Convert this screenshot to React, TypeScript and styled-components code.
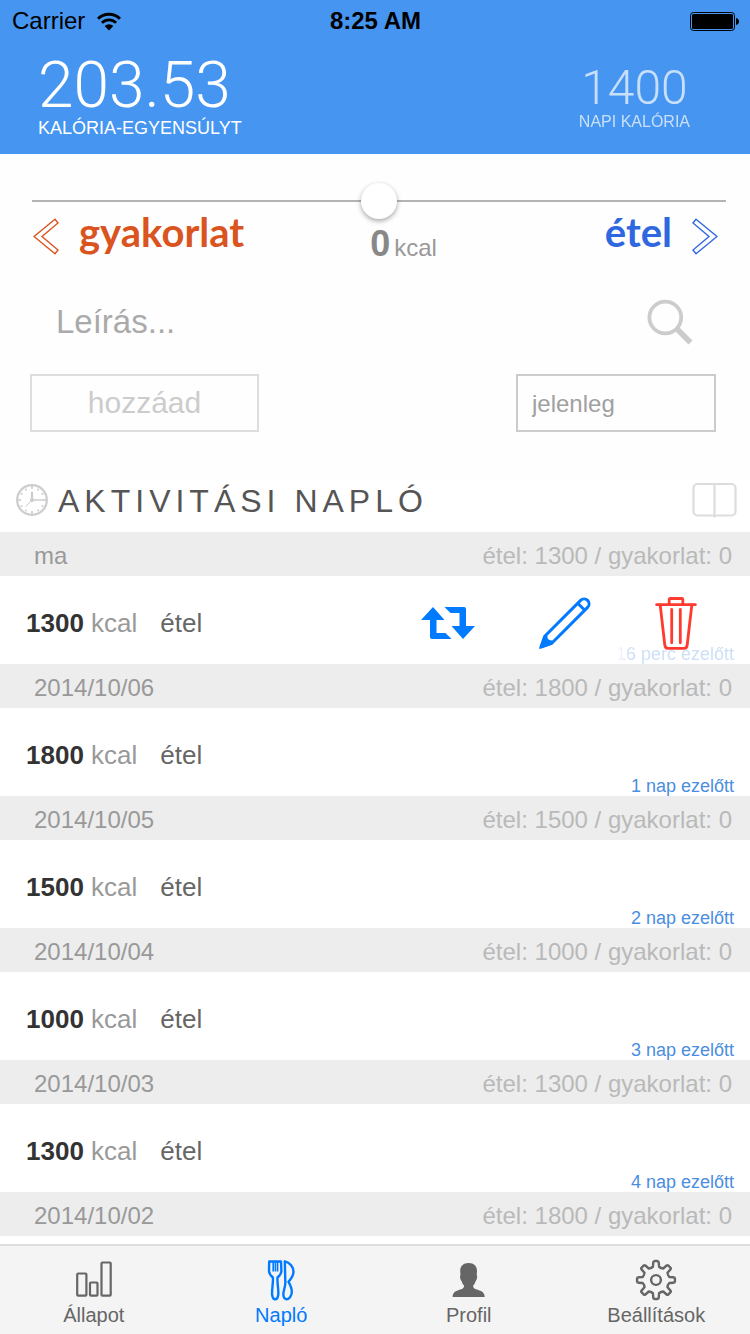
import React from "react";
import styled, { createGlobalStyle, css } from "styled-components";

const GlobalStyle = createGlobalStyle`
  *, *::before, *::after { box-sizing: border-box; }
  body {
    margin: 0;
    background: #fff;
    font-family: "Liberation Sans", Arial, sans-serif;
  }
  button, input { font-family: inherit; }
  button { padding: 0; border: 0; background: none; cursor: pointer; }
`;

const blue = "#007aff";
const red = "#ff3b30";

const Screen = styled.div`
  display: flex;
  flex-direction: column;
  min-height: 100vh;
`;

const Header = styled.header`
  background: #4595f1;
  padding-bottom: 16px;
`;

const StatusBar = styled.div`
  display: grid;
  grid-template-columns: 1fr auto 1fr;
  align-items: center;
  height: 40px;
  padding: 2px 11px 0 12px;
  font-size: 24px;
  line-height: 28px;
  color: #000;
`;

const Carrier = styled.div`
  display: flex;
  align-items: center;
  gap: 12px;
`;

const Time = styled.time`
  font-weight: 700;
`;

const BatterySlot = styled.div`
  display: flex;
  justify-content: flex-end;
`;

const Totals = styled.div`
  display: flex;
  justify-content: space-between;
  padding: 14px 60px 0 38px;
  color: #fff;
`;

const Total = styled.div<{ $minor?: boolean }>`
  display: flex;
  flex-direction: column;
  ${({ $minor }) =>
    $minor &&
    css`
      align-items: center;
      padding-top: 10px;
      opacity: 0.7;
    `}
`;

const TotalValue = styled.span<{ $minor?: boolean }>`
  font-family: Roboto, "Liberation Sans", sans-serif;
  font-weight: 300;
  font-size: ${({ $minor }) => ($minor ? 48 : 64)}px;
  line-height: ${({ $minor }) => ($minor ? 48 : 64)}px;
`;

const TotalLabel = styled.span<{ $minor?: boolean }>`
  font-size: ${({ $minor }) => ($minor ? 16 : 18)}px;
  line-height: 20px;
`;

const Entry = styled.form`
  background: #fefefe;
  padding-top: 28px;
`;

const Slider = styled.input`
  appearance: none;
  display: block;
  width: calc(100% - 56px);
  height: 38px;
  margin: 0 24px 0 32px;
  background: linear-gradient(#b3b3b3, #b3b3b3) center / 100% 2px no-repeat;

  &::-webkit-slider-thumb {
    appearance: none;
    width: 36px;
    height: 36px;
    border-radius: 50%;
    background: #fff;
    box-shadow: 0 2px 5px rgba(0, 0, 0, 0.35);
  }
`;

const Directions = styled.div`
  display: grid;
  grid-template-columns: 1fr auto 1fr;
  height: 50px;
  padding: 0 32px 0 33px;
`;

const Direction = styled.button<{ $color: string; $end?: boolean }>`
  display: flex;
  align-items: center;
  justify-self: ${({ $end }) => ($end ? "end" : "start")};
  gap: 20px;
  height: 32px;
  color: ${({ $color }) => $color};
  font-family: Lato, "Liberation Sans", sans-serif;
  font-weight: 700;
  font-size: 40px;
  line-height: 32px;
`;

const DirectionLabel = styled.span`
  padding-bottom: 8px;
`;

const Amount = styled.output`
  align-self: start;
  padding-left: 56px;
  font-size: 24px;
  line-height: 48px;
  color: #999;
`;

const AmountValue = styled.b`
  margin-right: 4px;
  font-size: 36px;
  color: #888;
`;

const SearchRow = styled.div`
  display: flex;
  align-items: center;
  justify-content: space-between;
  height: 64px;
  margin-top: 20px;
  padding: 0 57px 0 56px;
`;

const Description = styled.input`
  flex: 1;
  min-width: 0;
  padding: 0;
  border: 0;
  background: none;
  font-size: 33px;
  line-height: 40px;
  color: #555;
  &::placeholder { color: #aaa; opacity: 1; }
`;

const IconButton = styled.button<{ $color: string }>`
  display: flex;
  color: ${({ $color }) => $color};
`;

const SubmitRow = styled.div`
  display: flex;
  justify-content: space-between;
  padding: 20px 34px 48px 30px;
`;

const AddButton = styled.button`
  width: 229px;
  height: 58px;
  border: 2px solid #ddd;
  font-size: 30px;
  color: #ccc;
`;

const WhenInput = styled.input`
  width: 200px;
  height: 58px;
  padding: 2px 14px 0;
  border: 2px solid #ccc;
  background: none;
  font-size: 24px;
  color: #555;
  &::placeholder { color: #a0a0a0; opacity: 1; }
`;

const LogBar = styled.div`
  display: flex;
  align-items: center;
  gap: 10px;
  height: 52px;
  padding: 0 13px 12px 16px;
`;

const LogTitle = styled.h1`
  flex: 1;
  margin: 0;
  font-size: 32px;
  line-height: 40px;
  font-weight: 400;
  letter-spacing: 5px;
  color: #555;
  padding-top: 2px;
`;

const Log = styled.main`
  flex: 1;
`;

const DayHeader = styled.h2`
  display: flex;
  align-items: center;
  justify-content: space-between;
  height: 44px;
  margin: 0;
  padding: 4px 18px 0 34px;
  background: #ededed;
  font-size: 24px;
  line-height: 28px;
  font-weight: 400;
  color: #999;
`;

const DayTotals = styled.span`
  color: #b9b9b9;
`;

const LogRow = styled.article`
  position: relative;
  display: flex;
  align-items: center;
  height: 88px;
  padding: 0 53px 0 26px;
  background: #fff;
  font-size: 26px;
  line-height: 30px;
`;

const Calories = styled.span`
  padding-top: 6px;
  color: #999;
`;

const CaloriesValue = styled.b`
  color: #333;
`;

const Kind = styled.span`
  flex: 1;
  padding: 6px 0 0 23px;
  color: #666;
`;

const Actions = styled.div`
  display: flex;
  align-items: center;
  gap: 64px;
  padding-top: 6px;
`;

const Ago = styled.span<{ $faded?: boolean }>`
  position: absolute;
  right: 16px;
  bottom: 0;
  font-size: 18px;
  line-height: 20px;
  color: #4a8ee0;
  ${({ $faded }) =>
    $faded &&
    css`
      opacity: 0.28;
      pointer-events: none;
      mask-image: linear-gradient(to right, transparent, #000 14px);
    `}
`;

const TabBar = styled.nav`
  position: sticky;
  bottom: 0;
  display: grid;
  grid-template-columns: repeat(4, 1fr);
  height: 90px;
  border-top: 2px solid #dedede;
  background: #f4f4f4;
`;

const Tab = styled.a<{ $active?: boolean }>`
  display: flex;
  flex-direction: column;
  align-items: center;
  gap: 2px;
  padding-top: 13px;
  font-size: 20px;
  line-height: 24px;
  text-decoration: none;
  color: ${({ $active }) => ($active ? blue : "#666")};
`;

const WifiIcon = () => (
  <svg width="24" height="19" viewBox="0 0 24 19" fill="none" stroke="#000" aria-hidden="true">
    <path d="M1 6.8a15.6 15.6 0 0 1 22 0" strokeWidth="3" />
    <path d="M4.9 10.8a10 10 0 0 1 14.2 0" strokeWidth="2.8" />
    <path d="M12 18.4l-4.3-4.3a6 6 0 0 1 8.6 0z" fill="#000" stroke="none" />
  </svg>
);

const BatteryIcon = () => (
  <svg width="49" height="19" viewBox="0 0 49 19" aria-hidden="true">
    <rect x="0.5" y="0.5" width="44" height="18" rx="3" fill="none" stroke="#000" />
    <rect x="2" y="2" width="41" height="15" rx="1.5" />
    <path d="M46 6q3 .6 3 3.5T46 13z" />
  </svg>
);

const Chevron = ({ flip = false }: { flip?: boolean }) => (
  <svg width="26" height="37" viewBox="0 0 26 37" fill="none" stroke="currentColor" strokeWidth="1.4" aria-hidden="true">
    <path
      d={flip ? "M25 18.5L4 1.2L1 5L17 18.5L1 32L4 35.8Z" : "M1 18.5L22 1.2L25 5L9 18.5L25 32L22 35.8Z"}
    />
  </svg>
);

const SearchIcon = () => (
  <svg width="48" height="48" viewBox="0 0 48 48" fill="none" stroke="currentColor" aria-hidden="true">
    <circle cx="20.3" cy="19.5" r="15.9" strokeWidth="3.8" />
    <path d="M31.5 30.5L45.5 44.5" strokeWidth="5.6" />
  </svg>
);

const ClockIcon = () => (
  <svg width="32" height="32" viewBox="0 0 32 32" fill="none" stroke="#ccc" aria-hidden="true">
    <circle cx="16" cy="16" r="14.8" strokeWidth="2.2" />
    {Array.from({ length: 12 }, (_, i) => (
      <path key={i} d={i % 3 ? "M16 3v1.8" : "M16 2v3"} strokeWidth="1.6" transform={`rotate(${i * 30} 16 16)`} />
    ))}
    <path d="M16 8v8" strokeWidth="2.2" />
    <path d="M16 16h11" strokeWidth="1.4" />
    <path d="M16 16l-6.5 6.5" strokeWidth="1" />
    <circle cx="16" cy="16" r="2" fill="#ccc" stroke="none" />
  </svg>
);

const BookIcon = () => (
  <svg width="45" height="36" viewBox="0 0 45 36" fill="none" stroke="currentColor" strokeWidth="2.2" strokeLinecap="round" aria-hidden="true">
    <rect x="1.5" y="2" width="42" height="31.5" rx="4" />
    <path d="M22.5 2.5V34.8" />
  </svg>
);

const RepeatIcon = () => (
  <svg width="54" height="32" viewBox="0 0 54 32" fill="currentColor" aria-hidden="true">
    <path d="M12 0L23.5 13H15.5V26H24.5L30.5 32H11Q9 32 9 30V13H0Z" />
    <path d="M42 32L30.5 19H38.5V6H29.5L23.5 0H43Q45 0 45 2V19H54Z" />
  </svg>
);

const PencilIcon = () => (
  <svg width="52" height="52" viewBox="0 0 52 52" fill="none" stroke="currentColor" strokeWidth="3" aria-hidden="true">
    <path d="M2 50L6 39L41.6 3.4a4.9 4.9 0 0 1 7 7L13 46Z" strokeLinejoin="round" />
    <path d="M38.5 6L46 13.5" />
    <path d="M0 52L4.5 38.5L8.5 38.5Q7.5 43.500 13.5 43.5L13.5 47.5Z" fill="currentColor" stroke="none" />
  </svg>
);

const TrashIcon = () => (
  <svg width="42" height="54" viewBox="0 0 42 54" fill="none" stroke="currentColor" strokeWidth="2.8" strokeLinecap="round" strokeLinejoin="round" aria-hidden="true">
    <path d="M1.6 8.7H40.4M14.2 8.5V3.5Q14.2 2.5 15.2 2.5H26.8Q27.8 2.5 27.8 3.5V8.5" />
    <path d="M5.2 9L9.8 49Q10.2 52.3 13 52.3H29Q31.8 52.3 32.2 49L36.8 9M16.7 13.5V46.8M25.3 13.5V46.8" />
  </svg>
);

const BarsIcon = () => (
  <svg width="38" height="42" viewBox="0 0 38 42" fill="none" stroke="currentColor" strokeWidth="2.2" aria-hidden="true">
    <rect x="2.2" y="14.5" width="9.2" height="22.2" rx="1" />
    <rect x="15" y="23.5" width="7.5" height="13.2" rx="1" />
    <rect x="26.5" y="3.5" width="9.2" height="33.2" rx="1" />
  </svg>
);

const CutleryIcon = () => (
  <svg width="30" height="42" viewBox="0 0 30 42" fill="none" stroke="currentColor" strokeWidth="2.4" strokeLinejoin="round" aria-hidden="true">
    <path d="M3.2 2.5H15L15.4 12Q15.2 15.5 11.5 18.5C11 24 12.8 31 12.3 35.5Q11.7 40.3 9.2 40.3T6.1 35.5C5.6 31 7.4 24 6.9 18.5Q3.2 15.5 3 12Z" />
    <path d="M7.2 2.5V12.5M9.4 2.5V12.5M11.6 2.5V12.5" strokeWidth="1.6" />
    <path d="M18.8 2.3C24 3.5 27.5 8 27.5 12.8C27.5 17 25 20 22.5 22.8C25 27 26.5 31 25.5 35Q24 40 20.5 40.3C17.5 40 16.8 36 17.8 32C18.5 28.5 19.7 26 19.3 22.5Z" />
  </svg>
);

const PersonIcon = () => (
  <svg width="34" height="42" viewBox="0 -3 34 42" fill="currentColor" aria-hidden="true">
    <path d="M16.6 1C22 1 25 4 25 9C25 11 24.6 12 24.8 13C25.6 14 25 18 23.7 19C23 21 22.2 22.5 21.2 23.5C21 25.5 22 26.5 24 27.2C29 28.7 32.7 30 32.7 35H.6C.6 30 4.2 28.7 9.2 27.2C11.2 26.5 12.2 25.5 12 23.5C11 22.5 10.2 21 9.5 19C8.2 18 7.6 14 8.4 13C8.6 12 8.2 11 8.2 9C8.2 4 11.2 1 16.6 1Z" />
  </svg>
);

const gearPoint = (radius: number, degrees: number) => {
  const a = (degrees * Math.PI) / 180;
  return `${(21 + radius * Math.sin(a)).toFixed(2)} ${(21 - radius * Math.cos(a)).toFixed(2)}`;
};

const gearPath =
  Array.from({ length: 8 }, (_, i) => {
    const c = i * 45;
    return [
      `${i ? "L" : "M"}${gearPoint(13.6, c - 13)}`,
      `L${gearPoint(17.6, c - 9)}`,
      `Q${gearPoint(19, c - 8)} ${gearPoint(19, c - 5)}`,
      `L${gearPoint(19, c + 5)}`,
      `Q${gearPoint(19, c + 8)} ${gearPoint(17.6, c + 9)}`,
      `L${gearPoint(13.6, c + 13)}`,
      `Q${gearPoint(12.6, c + 22.5)} ${gearPoint(13.6, c + 32)}`,
    ].join("");
  }).join("") + "Z";

const GearIcon = () => (
  <svg width="42" height="42" viewBox="0 0 42 42" fill="none" stroke="currentColor" strokeWidth="2.4" strokeLinejoin="round" aria-hidden="true">
    <path d={gearPath} />
    <circle cx="21" cy="21" r="4.9" />
  </svg>
);

interface Day {
  date: string;
  food: number;
  ago?: string;
  open?: boolean;
}

const days: Day[] = [
  { date: "ma", food: 1300, ago: "16 perc ezelőtt", open: true },
  { date: "2014/10/06", food: 1800, ago: "1 nap ezelőtt" },
  { date: "2014/10/05", food: 1500, ago: "2 nap ezelőtt" },
  { date: "2014/10/04", food: 1000, ago: "3 nap ezelőtt" },
  { date: "2014/10/03", food: 1300, ago: "4 nap ezelőtt" },
  { date: "2014/10/02", food: 1800 },
];

const DaySection = ({ date, food, ago, open }: Day) => (
  <section>
    <DayHeader>
      {date}
      <DayTotals>étel: {food} / gyakorlat: 0</DayTotals>
    </DayHeader>
    {ago && (
      <LogRow>
        <Calories>
          <CaloriesValue>{food}</CaloriesValue> kcal
        </Calories>
        <Kind>étel</Kind>
        <Ago $faded={open}>{ago}</Ago>
        {open && (
          <Actions>
            <IconButton type="button" $color={blue} aria-label="Ismétlés"><RepeatIcon /></IconButton>
            <IconButton type="button" $color={blue} aria-label="Szerkesztés"><PencilIcon /></IconButton>
            <IconButton type="button" $color={red} aria-label="Törlés"><TrashIcon /></IconButton>
          </Actions>
        )}
      </LogRow>
    )}
  </section>
);

export default function App() {
  return (
    <Screen>
      <GlobalStyle />
      <Header>
        <StatusBar>
          <Carrier>Carrier <WifiIcon /></Carrier>
          <Time>8:25 AM</Time>
          <BatterySlot><BatteryIcon /></BatterySlot>
        </StatusBar>
        <Totals>
          <Total>
            <TotalValue>203.53</TotalValue>
            <TotalLabel>KALÓRIA-EGYENSÚLYT</TotalLabel>
          </Total>
          <Total $minor>
            <TotalValue $minor>1400</TotalValue>
            <TotalLabel $minor>NAPI KALÓRIA</TotalLabel>
          </Total>
        </Totals>
      </Header>

      <Entry onSubmit={(e) => e.preventDefault()}>
        <Slider type="range" min={-1000} max={1000} defaultValue={0} aria-label="kcal" />
        <Directions>
          <Direction type="button" $color="#d9541e">
            <Chevron />
            <DirectionLabel>gyakorlat</DirectionLabel>
          </Direction>
          <Amount><AmountValue>0</AmountValue>kcal</Amount>
          <Direction type="button" $color="#2f67e0" $end>
            <DirectionLabel>étel</DirectionLabel>
            <Chevron flip />
          </Direction>
        </Directions>
        <SearchRow>
          <Description type="text" placeholder="Leírás..." aria-label="Leírás" />
          <IconButton type="button" $color="#ccc" aria-label="Keresés"><SearchIcon /></IconButton>
        </SearchRow>
        <SubmitRow>
          <AddButton type="submit">hozzáad</AddButton>
          <WhenInput type="text" placeholder="jelenleg" aria-label="Időpont" />
        </SubmitRow>
      </Entry>

      <Log>
        <LogBar>
          <ClockIcon />
          <LogTitle>AKTIVITÁSI NAPLÓ</LogTitle>
          <IconButton type="button" $color="#ddd" aria-label="Napló megnyitása"><BookIcon /></IconButton>
        </LogBar>
        {days.map((day) => <DaySection key={day.date} {...day} />)}
      </Log>

      <TabBar>
        <Tab href="#allapot"><BarsIcon />Állapot</Tab>
        <Tab href="#naplo" $active><CutleryIcon />Napló</Tab>
        <Tab href="#profil"><PersonIcon />Profil</Tab>
        <Tab href="#beallitasok"><GearIcon />Beállítások</Tab>
      </TabBar>
    </Screen>
  );
}
